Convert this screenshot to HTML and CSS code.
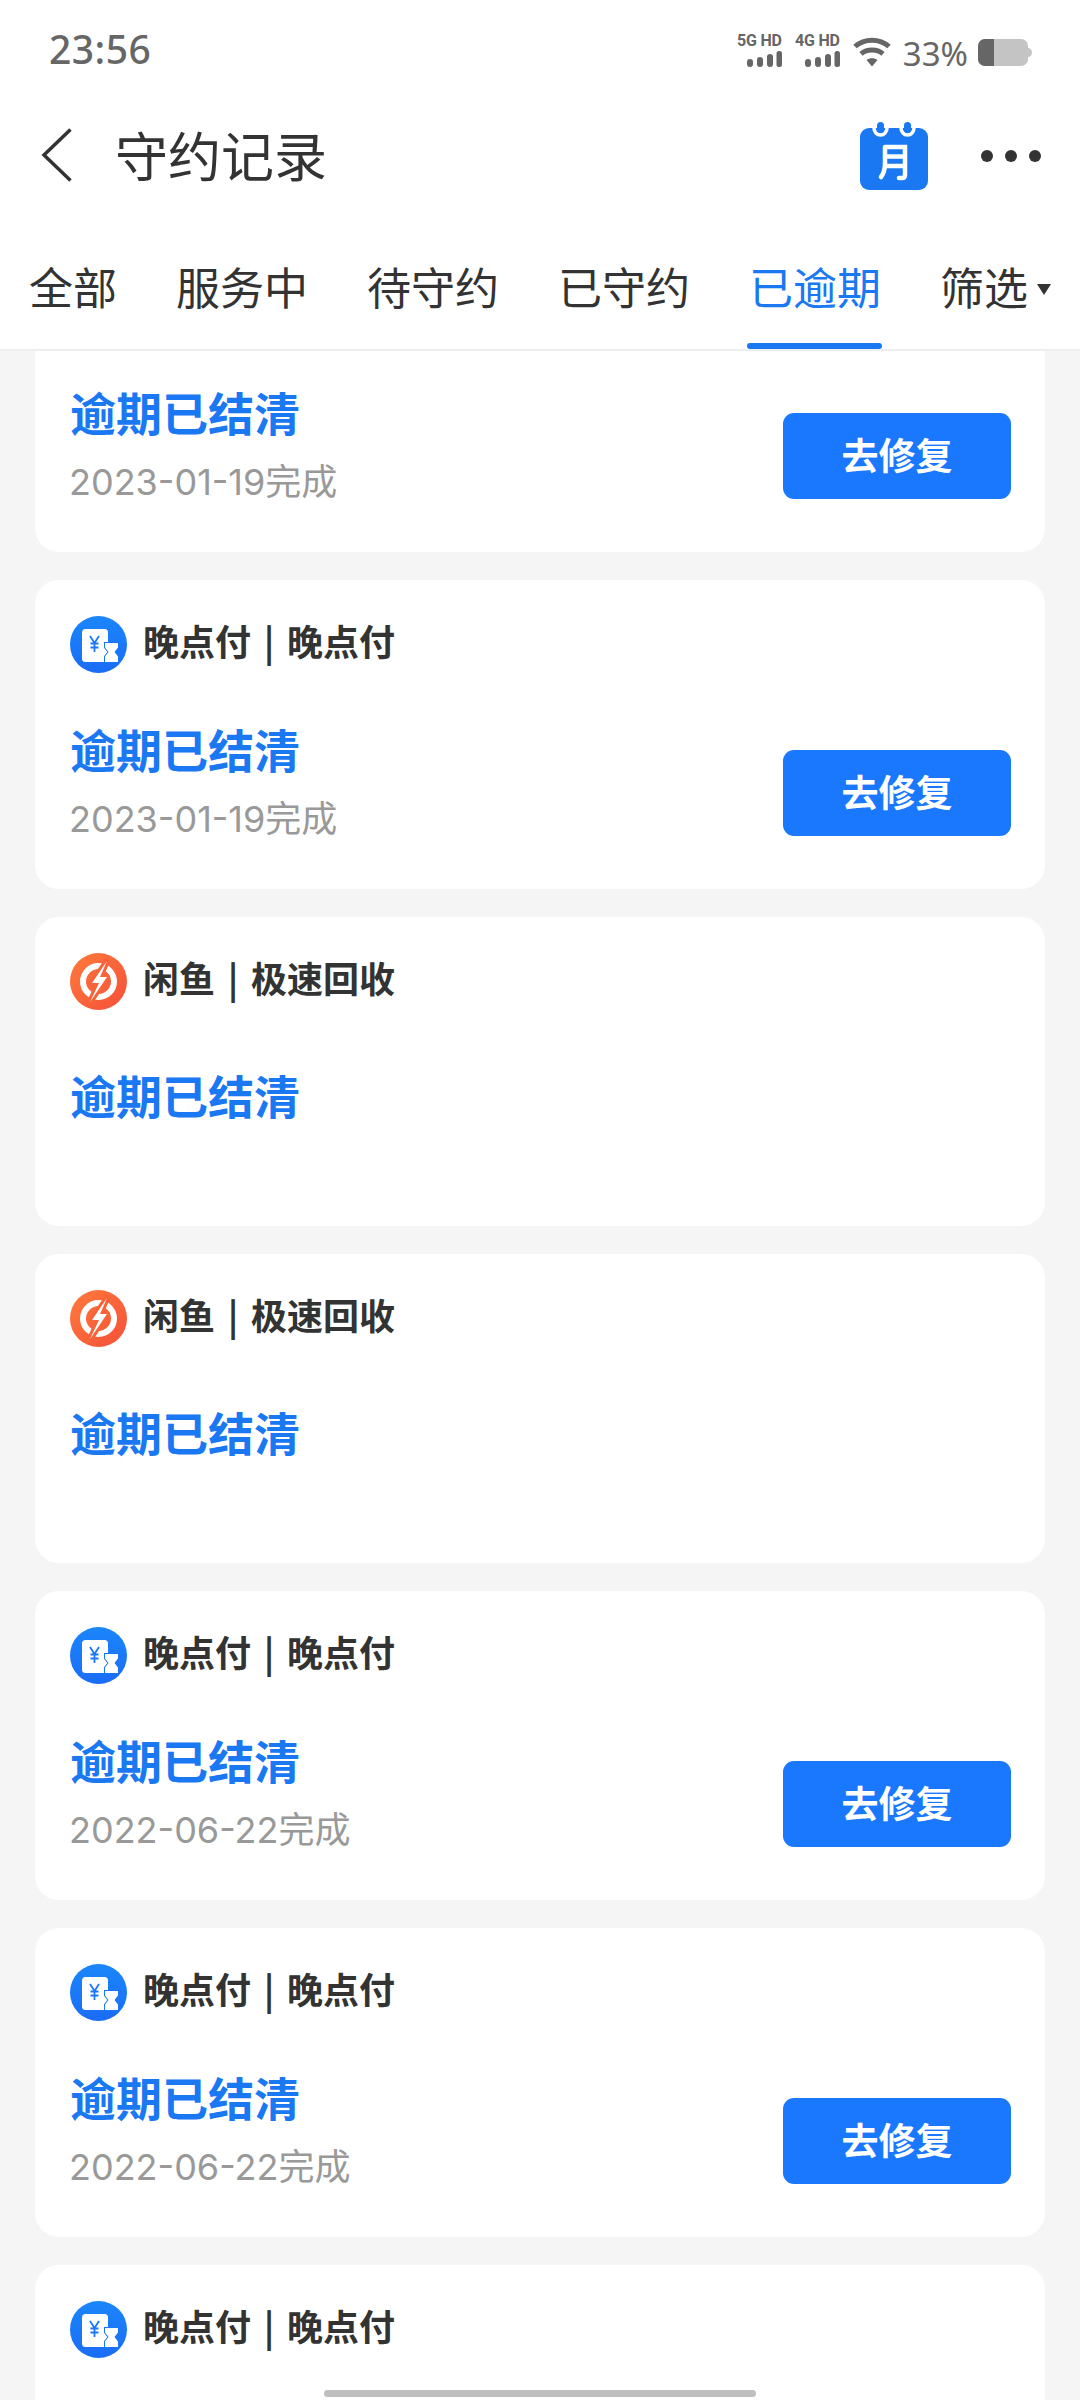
FILE: index.html
```html
<!DOCTYPE html>
<html lang="zh-CN">
<head>
<meta charset="utf-8">
<title>守约记录</title>
<link rel="stylesheet" href="styles.css">
</head>
<body>
<svg class="defs" width="0" height="0" aria-hidden="true">
  <defs>
    <linearGradient id="blueGrad" x1="0" y1="0" x2="0" y2="1"><stop offset="0" stop-color="#1b86fb"/><stop offset="1" stop-color="#1a6cf5"/></linearGradient>
    <linearGradient id="orangeGrad" x1="0" y1="0" x2="1" y2="1"><stop offset="0" stop-color="#ff7a3a"/><stop offset="1" stop-color="#f4503a"/></linearGradient>
    <symbol id="logo-wdf" viewBox="0 0 57 57">
      <circle cx="28.5" cy="28.5" r="28.5" fill="url(#blueGrad)"/>
      <rect x="12" y="13" width="26" height="33" rx="3.500" fill="#fff"/>
      <path d="M35 27h13v4.500l-3.500 4.500 3.500 4.500V46H35v-5.500l3.500-4.500L35 31.500z" fill="#fff" stroke="#1a76f8" stroke-width="2" paint-order="stroke"/>
      <path d="M20 20l4.500 7 4.500-7M24.500 27v9M20.500 27.500h8M20.500 31.500h8" fill="none" stroke="#1b78f8" stroke-width="1.800"/>
    </symbol>
    <symbol id="logo-xy" viewBox="0 0 57 57">
      <circle cx="28.500" cy="28.500" r="28.500" fill="url(#orangeGrad)"/>
      <circle cx="28.500" cy="28.500" r="15.500" fill="none" stroke="#fff" stroke-width="6"/>
      <path d="M37 8L22 30h7l-9 19 17-25h-7z" fill="#fff" stroke="#f8633a" stroke-width="6" paint-order="stroke" stroke-linejoin="round"/>
    </symbol>
  </defs>
</svg>

<div class="screen">
  <header class="top">
    <div class="status">
      <span class="time">23:56</span>
      <div class="indicators">
        <div class="net">
          <span class="net-label">5G HD</span>
          <svg class="bars" width="35" height="16" viewBox="0 0 35 16"><g fill="#666"><rect x="0" y="8" width="6" height="8" rx="3"/><rect x="10" y="6" width="6" height="10" rx="3"/><rect x="20" y="3" width="6" height="13" rx="3"/><rect x="29.500" y="0" width="5.500" height="16" rx="2.500"/></g></svg>
        </div>
        <div class="net">
          <span class="net-label">4G HD</span>
          <svg class="bars" width="35" height="16" viewBox="0 0 35 16"><g fill="#666"><rect x="0" y="8" width="6" height="8" rx="3"/><rect x="10" y="6" width="6" height="10" rx="3"/><rect x="20" y="3" width="6" height="13" rx="3"/><rect x="29.500" y="0" width="5.500" height="16" rx="2.500"/></g></svg>
        </div>
        <svg class="wifi" width="38" height="30" viewBox="0 0 38 30"><g fill="none" stroke="#666" stroke-width="5"><path d="M2 9.500C11.500 1 26.500 1 36 9.500"/><path d="M8 16.800C14 11.800 24 11.800 30 16.800"/></g><path d="M13.500 23C16.500 20.800 21.500 20.800 24.500 23L19 29.500z" fill="#666"/></svg>
        <span class="pct">33%</span>
        <svg class="battery" width="54" height="27" viewBox="0 0 54 27"><rect x="0" y="0" width="50" height="27" rx="7" fill="#c4c4c4"/><path d="M7 0h9v27H7a7 7 0 0 1-7-7V7a7 7 0 0 1 7-7z" fill="#666"/><path d="M50 9a4 4.500 0 0 1 0 9z" fill="#c4c4c4"/></svg>
      </div>
    </div>
    <div class="nav">
      <svg class="back" width="32" height="54" viewBox="0 0 32 54"><path d="M29.500 1.500L3 27l26.500 25.500" fill="none" stroke="#333" stroke-width="3.500"/></svg>
      <h1 class="title">守约记录</h1>
      <svg class="cal" width="68" height="68" viewBox="0 0 68 68">
        <path d="M9 6h50a9 9 0 0 1 9 9v44a9 9 0 0 1-9 9H9a9 9 0 0 1-9-9V15a9 9 0 0 1 9-9z" fill="#1a78f2"/>
        <g fill="none" stroke="#fff" stroke-width="3.500"><path d="M14 6a6.500 7 0 0 0 13 0M41 6a6.500 7 0 0 0 13 0"/></g>
        <rect x="17" y="0" width="7" height="11" rx="3.500" fill="#1a78f2"/><rect x="44" y="0" width="7" height="11" rx="3.500" fill="#1a78f2"/>
        <path d="M25 25h20v28q0 3-3 3h-3M25 25v16q0 9-4 14M25 34.500h20M25 44h20" fill="none" stroke="#fff" stroke-width="4.500" stroke-linecap="round"/>
      </svg>
      <div class="more"><i></i><i></i><i></i></div>
    </div>
    <nav class="tabs">
      <span class="tab">全部</span>
      <span class="tab">服务中</span>
      <span class="tab">待守约</span>
      <span class="tab">已守约</span>
      <span class="tab tab-on">已逾期</span>
      <span class="tab">筛选<em class="caret"></em></span>
    </nav>
  </header>

  <main class="list">
    <article class="card card-cut">
      <div class="body"><div><div class="state">逾期已结清</div><div class="date">2023-01-19完成</div></div><span class="fix">去修复</span></div>
    </article>
    <article class="card">
      <div class="head"><svg class="logo"><use href="#logo-wdf"/></svg><span class="name">晚点付 | 晚点付</span></div>
      <div class="body"><div><div class="state">逾期已结清</div><div class="date">2023-01-19完成</div></div><span class="fix">去修复</span></div>
    </article>
    <article class="card">
      <div class="head"><svg class="logo"><use href="#logo-xy"/></svg><span class="name">闲鱼 | 极速回收</span></div>
      <div class="body body-plain"><div class="state">逾期已结清</div></div>
    </article>
    <article class="card">
      <div class="head"><svg class="logo"><use href="#logo-xy"/></svg><span class="name">闲鱼 | 极速回收</span></div>
      <div class="body body-plain"><div class="state">逾期已结清</div></div>
    </article>
    <article class="card">
      <div class="head"><svg class="logo"><use href="#logo-wdf"/></svg><span class="name">晚点付 | 晚点付</span></div>
      <div class="body"><div><div class="state">逾期已结清</div><div class="date">2022-06-22完成</div></div><span class="fix">去修复</span></div>
    </article>
    <article class="card">
      <div class="head"><svg class="logo"><use href="#logo-wdf"/></svg><span class="name">晚点付 | 晚点付</span></div>
      <div class="body"><div><div class="state">逾期已结清</div><div class="date">2022-06-22完成</div></div><span class="fix">去修复</span></div>
    </article>
    <article class="card">
      <div class="head"><svg class="logo"><use href="#logo-wdf"/></svg><span class="name">晚点付 | 晚点付</span></div>
    </article>
  </main>
  <div class="home-bar"></div>
</div>
</body>
</html>
```
FILE: styles.css
```css
* { box-sizing: border-box; }
html, body { margin: 0; padding: 0; }
body {
  width: 1080px;
  height: 2400px;
  overflow: hidden;
  background: #f5f5f5;
  font-family: "Noto Sans CJK SC", "Noto Sans", sans-serif;
  color: #333;
}
.defs { position: absolute; }
.screen { position: relative; width: 1080px; height: 2400px; overflow: hidden; display: flex; flex-direction: column; }

.top { position: relative; z-index: 2; flex: none; height: 351px; background: #fff; border-bottom: 2px solid #eeeeee; }

.status { height: 100px; display: flex; justify-content: space-between; align-items: flex-start; padding: 28px 48px 0 49px; }
.time { font-family: "Noto Sans", sans-serif; font-weight: 500; font-size: 39px; line-height: 46px; letter-spacing: 0.5px; color: #666; margin-top: -2px; }
.indicators { display: flex; align-items: flex-start; }
.net { width: 48px; display: flex; flex-direction: column; align-items: flex-end; margin-right: 10px; margin-top: 5px; }
.net-label { font-family: "Roboto", "Liberation Sans", sans-serif; font-weight: 700; font-size: 16px; line-height: 15px; letter-spacing: -0.2px; color: #666; white-space: nowrap; }
.bars { display: block; margin-top: 3px; }
.wifi { margin: 9px 12px 0 3px; }
.pct { font-family: "Noto Sans", sans-serif; font-size: 33px; line-height: 40px; color: #666; margin-top: 6px; margin-right: 10px; }
.battery { margin-top: 11px; }

.nav { height: 112px; display: flex; align-items: center; padding-left: 41px; position: relative; }
.back { flex: none; margin-top: -3px; }
.title { margin: -5px 0 0 42px; font-size: 53px; line-height: 70px; font-weight: 400; color: #333; flex: 1; }
.cal { flex: none; margin: -1px 53px 0 0; }
.more { display: flex; gap: 12px; margin: 0 39px 0 0; }
.more i { display: block; width: 12px; height: 12px; border-radius: 50%; background: #333; }

.tabs { display: flex; gap: 59px; padding-left: 29px; height: 137px; }
.tab { position: relative; font-size: 44px; line-height: 60px; color: #333; white-space: nowrap; padding-top: 44px; height: 137px; box-sizing: border-box; }
.tab-on { color: #1a78f2; }
.tab-on::after { content: ""; position: absolute; left: -2px; right: -1px; bottom: 0; height: 6px; border-radius: 3px; background: #1a78f2; }
.caret { display: inline-block; width: 0; height: 0; margin-left: 9px; vertical-align: 10px; border-left: 7px solid transparent; border-right: 7px solid transparent; border-top: 11px solid #333; }

.list { flex: 1; display: flex; flex-direction: column; gap: 28px; padding: 0 35px; }
.card { flex: none; height: 309px; background: #fff; border-radius: 24px; padding: 36px 34px 0 35px; }
.card-cut { height: 201px; padding-top: 32px; border-radius: 0 0 24px 24px; }
.card-cut .body { margin-top: 0; }
.head { display: flex; align-items: center; height: 57px; gap: 16px; }
.logo { width: 57px; height: 57px; flex: none; }
.name { font-size: 36px; line-height: 50px; font-weight: 700; word-spacing: 4.5px; color: #333; white-space: nowrap; padding-bottom: 10px; }
.body { display: flex; justify-content: space-between; align-items: flex-start; margin-top: 47px; }
.body-plain { margin-top: 56px; }
.state { font-size: 46px; line-height: 56px; font-weight: 700; color: #1a78f2; white-space: nowrap; }
.date { font-family: "Inter", "Noto Sans CJK SC", sans-serif; font-size: 36px; line-height: 50px; color: #999; margin: 18px 0 0 -1px; white-space: nowrap; }
.fix { width: 228px; height: 86px; margin-top: 30px; padding-bottom: 4px; border-radius: 11px; background: #1a78ff; color: #fff; font-size: 37px; font-weight: 700; display: flex; align-items: center; justify-content: center; }

.home-bar { position: absolute; left: 324px; bottom: 3px; width: 432px; height: 7px; border-radius: 4px; background: #bfbfbf; z-index: 3; }
```
